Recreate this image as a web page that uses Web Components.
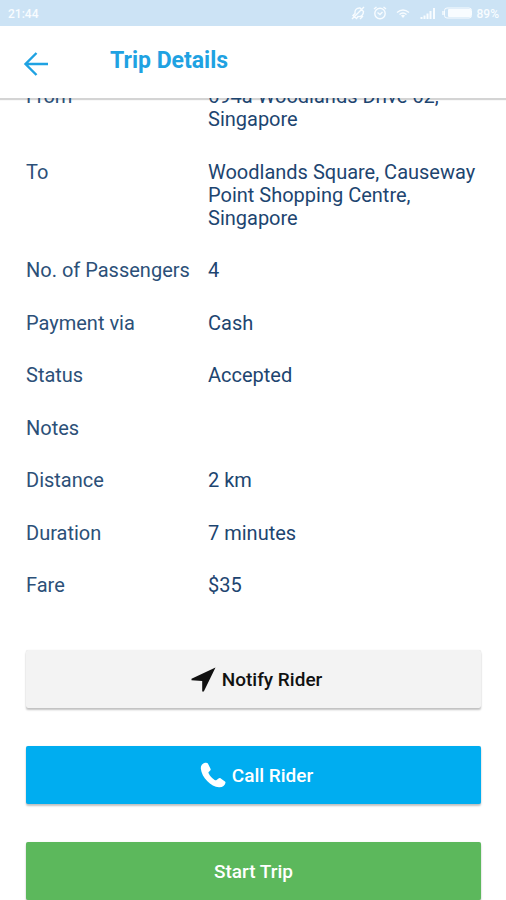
<!DOCTYPE html>
<html lang="en">
<head>
<meta charset="utf-8">
<meta name="viewport" content="width=device-width, initial-scale=1">
<title>Trip Details</title>
<style>
body { margin: 0; background: #fff; font-family: Roboto, "Liberation Sans", sans-serif; }
</style>
</head>
<body>
<trip-app></trip-app>
<script>
const define = (name, html) => {
  const template = document.createElement('template');
  template.innerHTML = html;
  customElements.define(name, class extends HTMLElement {
    constructor() {
      super();
      this.attachShadow({ mode: 'open' }).append(template.content.cloneNode(true));
    }
  });
};

define('status-bar', `
<style>
:host { display: flex; align-items: center; justify-content: space-between; height: 26px; padding: 0 7px 0 8px; background: #cce3f5; color: #f8fcff; font-size: 12px; font-weight: 500; }
span { padding-top: 2px; }
.icons { display: flex; align-items: center; }
svg { display: block; fill: none; stroke: currentColor; stroke-width: 1.4; }
.mute { margin-right: 8px; }
.alarm { margin-right: 9px; }
.wifi { margin-right: 10px; }
.signal { margin-right: 6px; }
.battery { margin-right: 5px; }
</style>
<span>21:44</span>
<div class="icons">
<svg class="mute" width="14" height="14" viewBox="0 0 14 14"><path d="M2 9.500L4 7.500C3.500 4 5.500 1.800 9 2L12.500 5.500C12.500 9 10 11 7 10.500L5.500 12.500ZM1 13L13 1M9 13l3-3"/></svg>
<svg class="alarm" width="14" height="14" viewBox="0 0 14 14"><circle cx="7" cy="7.500" r="5.200"/><path d="M4.500 6.500L7 8.500L9.500 6M1 3L3.500 1M13 3L10.500 1"/></svg>
<svg class="wifi" width="14" height="14" viewBox="0 0 14 14"><path d="M1 6.500Q7 1.500 13 6.500M3.500 8.500Q7 5.500 10.500 8.500"/><path d="M5 9.500Q7 8 9 9.500L7 12Z" fill="currentColor" stroke="none"/></svg>
<svg class="signal" width="16" height="12" viewBox="0 0 16 12"><path d="M1.500 12V10M4.500 12V8.500M7.500 12V6.500M10.500 12V4M14 12V1" stroke-width="2"/></svg>
<svg class="battery" width="30" height="12" viewBox="0 0 30 12"><rect x="2.500" y="1" width="27" height="10" rx="2.500" stroke-width="1"/><rect x="6" y="2" width="23" height="8" rx="1" fill="currentColor" stroke="none"/><path d="M1 4V8"/></svg>
<span>89%</span>
</div>`);

define('app-header', `
<style>
:host { display: flex; align-items: center; gap: 60px; box-sizing: border-box; height: 72px; padding: 0 22px; background: #fff; box-shadow: 0 2px 1px #d4d4d4; }
button { padding: 4px 0 0; border: 0; background: none; color: #1fa2e2; cursor: pointer; }
svg { display: block; }
h1 { margin: 0 0 2px; color: #1fa2e2; font-size: 23px; line-height: 28px; font-weight: 700; }
</style>
<button type="button" aria-label="Back"><svg width="28" height="28" viewBox="0 0 28 28" fill="none" stroke="currentColor" stroke-width="2.400"><path d="M14.500 3L3.500 14L14.500 25M3.500 14H26"/></svg></button>
<h1><slot></slot></h1>`);

define('trip-row', `
<style>
:host { display: grid; grid-template-columns: 2fr 3fr; color: #1d4570; font-size: 20px; line-height: 23px; }
.label { white-space: nowrap; color: #2c5078; }
</style>
<span class="label"><slot name="label"></slot></span>
<span><slot></slot></span>`);

define('action-button', `
<style>
:host { display: block; --bg: #f3f3f3; --fg: #111; }
:host([kind="call"]) { --bg: #00adf0; --fg: #fff; }
:host([kind="start"]) { --bg: #5cb85c; --fg: #fff; }
button { display: flex; align-items: center; justify-content: center; gap: 6px; width: 100%; height: 58px; padding: 2px 0 0; border: 0; border-radius: 2px; background: var(--bg); color: var(--fg); font: 500 19px/24px Roboto, "Liberation Sans", sans-serif; box-shadow: 0 2px 2px rgba(0,0,0,.24), 0 0 1px rgba(0,0,0,.14); cursor: pointer; }
::slotted(svg) { margin: 0 0 2px 6px; }
</style>
<button type="button"><slot name="icon"></slot><span><slot></slot></span></button>`);

define('trip-app', `
<style>
:host { display: flex; flex-direction: column; height: 100vh; min-height: 820px; overflow: hidden; }
main { flex: 1; display: flex; flex-direction: column; position: relative; overflow: hidden; padding: 0 25px 0 26px; }
.rows { flex: 1; display: flex; flex-direction: column; justify-content: space-between; margin: -13px 0 53px; }
.actions { display: grid; gap: 38px; }
</style>
<status-bar></status-bar>
<app-header>Trip Details</app-header>
<main>
<div class="rows">
<trip-row><span slot="label">From</span>694a Woodlands Drive 62, Singapore</trip-row>
<trip-row><span slot="label">To</span>Woodlands Square, Causeway Point Shopping Centre, Singapore</trip-row>
<trip-row><span slot="label">No. of Passengers</span>4</trip-row>
<trip-row><span slot="label">Payment via</span>Cash</trip-row>
<trip-row><span slot="label">Status</span>Accepted</trip-row>
<trip-row><span slot="label">Notes</span></trip-row>
<trip-row><span slot="label">Distance</span>2 km</trip-row>
<trip-row><span slot="label">Duration</span>7 minutes</trip-row>
<trip-row><span slot="label">Fare</span>$35</trip-row>
</div>
<div class="actions">
<action-button><svg slot="icon" width="25" height="25" viewBox="0 0 25 25" fill="currentColor"><path d="M24.500 0.500L12.800 24.500H11.200V14L0.500 13.200V11.800Z"/></svg>Notify Rider</action-button>
<action-button kind="call"><svg slot="icon" width="26" height="26" viewBox="0 0 26 26" fill="currentColor"><path d="M5 .8C2.500 1.500 .5 3.500 .8 6.500C1.600 15.500 11 24.800 19 25.300C22.500 25.500 25 23.500 25.500 20.800C25.600 20 25.300 19.600 24.600 19.200L20.800 16.500C19.900 15.900 19.200 16 18.500 16.600L16.600 18C15.900 18.500 15.300 18.400 14.600 18C12 16.300 9.900 14 8.600 11.300C8.300 10.600 8.400 10.200 9 9.700L10.200 8.600C10.800 8 10.800 7.400 10.500 6.700L7.900 1.600C7.400 .7 6.400 .4 5 .8Z"/></svg>Call Rider</action-button>
<action-button kind="start">Start Trip</action-button>
</div>
</main>`);
</script>
</body>
</html>
